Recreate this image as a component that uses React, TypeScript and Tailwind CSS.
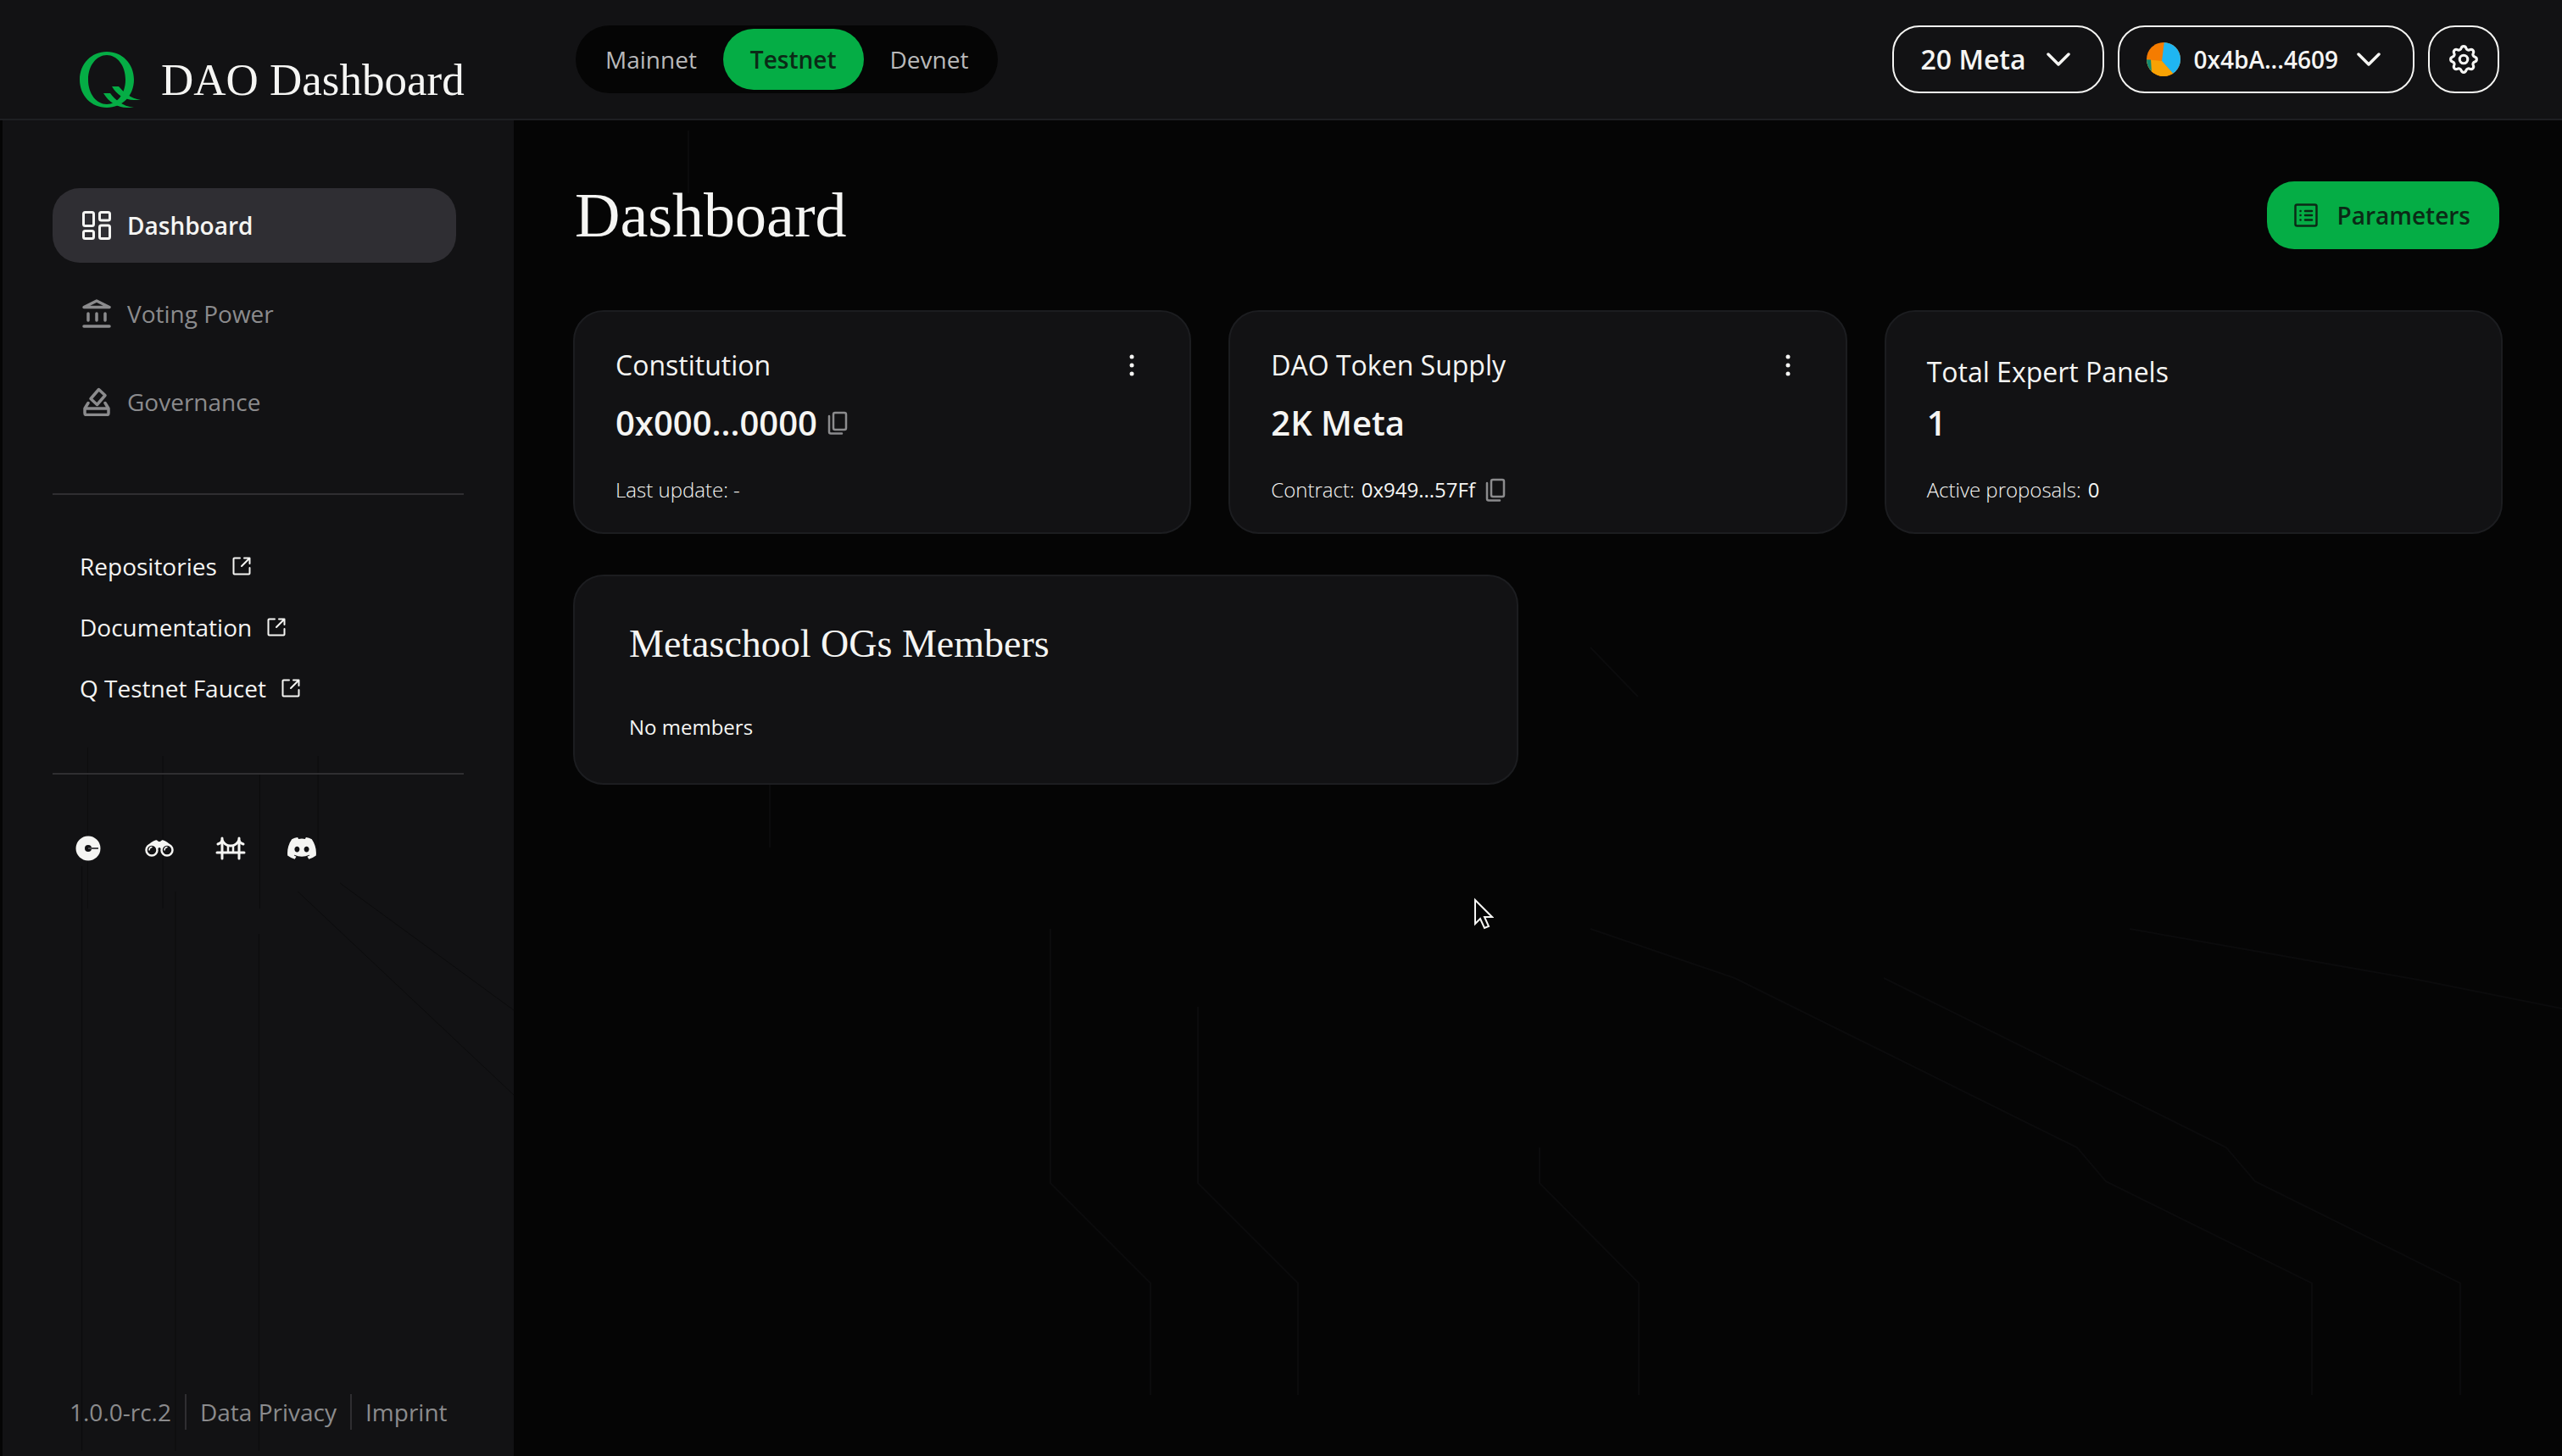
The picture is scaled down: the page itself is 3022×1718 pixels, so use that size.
import React from "react";

const sans = "font-['Open_Sans','Noto_Sans',sans-serif]";
const serif = "font-['Liberation_Serif',serif]";

function Logo() {
  return (
    <svg viewBox="0 0 72 66" className="h-[66px] w-[72px] shrink-0" fill="#05ad45" aria-hidden="true">
      <path
        fillRule="evenodd"
        d="M32 0C50 0 64 14 64 33S50 66 32 66 0 52 0 33 14 0 32 0Zm0 4C20 4 10 16 10 33s10 29 22 29 22-12 22-29S44 4 32 4Z"
      />
      <path d="M38 41h8c6 7 14 14 26 16h-8c-11 0-21-7-26-16Z" />
      <path d="M28 49h8c6 8 14 15 28 17h-8c-12 0-22-7-28-17Z" />
    </svg>
  );
}

function GridIcon() {
  return (
    <svg viewBox="0 0 34 34" className="size-[34px]" fill="none" stroke="currentColor" strokeWidth="3" aria-hidden="true">
      <rect x="1.5" y="1.5" width="12" height="16" rx="2" />
      <rect x="20.500" y="1.5" width="12" height="9.500" rx="2" />
      <rect x="1.5" y="23.500" width="12" height="9" rx="2" />
      <rect x="20.500" y="17" width="12" height="15.500" rx="2" />
    </svg>
  );
}

function BankIcon() {
  return (
    <svg viewBox="0 0 34 34" className="size-[34px]" fill="none" stroke="currentColor" strokeWidth="3.500" strokeLinecap="round" strokeLinejoin="round" aria-hidden="true">
      <path d="M2 9.500 17 2l15 7.500Z" />
      <path d="M7 17v8M17 17v8M27 17v8M2 32h30" />
    </svg>
  );
}

function VoteIcon() {
  return (
    <svg viewBox="0 0 34 34" className="size-[34px]" fill="none" stroke="currentColor" strokeWidth="3.500" strokeLinecap="round" strokeLinejoin="round" aria-hidden="true">
      <path d="M19.500 2.500 27 9.500 17.500 20.500 10 13.500Z" />
      <path d="M7 18.500 3 25v5.500a2 2 0 0 0 2 2h24a2 2 0 0 0 2-2V25l-4-6.500M3 25h28" />
    </svg>
  );
}

function ExternalIcon() {
  return (
    <svg viewBox="0 0 22 22" className="size-[22px]" fill="none" stroke="currentColor" strokeWidth="2" strokeLinecap="round" strokeLinejoin="round" aria-hidden="true">
      <path d="M9 1.500H2.500a1 1 0 0 0-1 1v17a1 1 0 0 0 1 1h17a1 1 0 0 0 1-1V13" />
      <path d="M14 1.500h6.500V8M20 2l-9 9" />
    </svg>
  );
}

function CopyIcon() {
  return (
    <svg viewBox="0 0 24 28" className="h-7 w-6" fill="none" stroke="currentColor" strokeWidth="2.500" strokeLinecap="round" strokeLinejoin="round" aria-hidden="true">
      <rect x="7" y="2" width="15" height="20" rx="2" />
      <path d="M2 6v18.500a2 2 0 0 0 2 2h13" />
    </svg>
  );
}

function DotsIcon() {
  return (
    <svg viewBox="0 0 8 26" className="h-[26px] w-2" fill="currentColor" aria-hidden="true">
      <circle cx="4" cy="3" r="2.500" />
      <circle cx="4" cy="13" r="2.500" />
      <circle cx="4" cy="23" r="2.500" />
    </svg>
  );
}

function Chevron() {
  return (
    <svg viewBox="0 0 28 16" className="h-4 w-7" fill="none" stroke="currentColor" strokeWidth="3.500" strokeLinecap="round" strokeLinejoin="round" aria-hidden="true">
      <path d="m2 2 12 12L26 2" />
    </svg>
  );
}

function Avatar() {
  return (
    <svg viewBox="0 0 40 40" className="size-10" aria-hidden="true">
      <clipPath id="avatar-clip">
        <circle cx="20" cy="20" r="20" />
      </clipPath>
      <g clipPath="url(#avatar-clip)">
        <rect width="40" height="40" fill="#f57c00" />
        <path d="M21-2 18 22 34 40h10V-2Z" fill="#1fb6f2" />
        <path d="M-2 20 18 22 34 40H-2Z" fill="#f8a204" />
        <path d="M-2 20 5 20.500 6 36H-2Z" fill="#138a72" />
      </g>
    </svg>
  );
}

function GearIcon() {
  return (
    <svg viewBox="0 0 24 24" className="size-[38px]" fill="none" stroke="currentColor" strokeWidth="2" strokeLinecap="round" strokeLinejoin="round" aria-hidden="true">
      <circle cx="12" cy="12" r="3" />
      <path d="M10.200 3.600a1.900 1.900 0 0 1 3.600 0 1.900 1.900 0 0 0 2.900 1.200 1.900 1.900 0 0 1 2.500 2.500 1.900 1.900 0 0 0 1.200 2.900 1.900 1.900 0 0 1 0 3.600 1.900 1.900 0 0 0-1.200 2.900 1.900 1.900 0 0 1-2.500 2.500 1.900 1.900 0 0 0-2.900 1.200 1.900 1.900 0 0 1-3.600 0 1.900 1.900 0 0 0-2.900-1.200 1.900 1.900 0 0 1-2.500-2.500 1.900 1.900 0 0 0-1.200-2.900 1.900 1.900 0 0 1 0-3.600 1.900 1.900 0 0 0 1.200-2.900 1.900 1.900 0 0 1 2.500-2.500 1.900 1.900 0 0 0 2.900-1.200Z" />
    </svg>
  );
}

function ListIcon() {
  return (
    <svg viewBox="0 0 28 28" className="size-7" fill="none" stroke="currentColor" strokeWidth="2.500" strokeLinecap="round" aria-hidden="true">
      <rect x="1.500" y="1.500" width="25" height="25" rx="2" />
      <path d="M7.500 9h.1M7.500 14h.1M7.500 19.500h.1M13 9h8M13 14h8M13 19.500h8" />
    </svg>
  );
}

function CoinIcon() {
  return (
    <svg viewBox="0 0 30 30" className="size-[30px]" aria-hidden="true">
      <circle cx="15" cy="15" r="14.500" fill="#f5f5f3" />
      <circle cx="15" cy="15" r="4" fill="#121214" />
      <path d="M15 15h12" stroke="#4a4a4c" strokeWidth="2" />
    </svg>
  );
}

function BinocularsIcon() {
  return (
    <svg viewBox="0 0 34 20" className="h-5 w-[34px]" fill="none" stroke="#f5f5f3" aria-hidden="true">
      <path d="M2 10C4 5 8 2 11 1c2-1 3-1 5 1h2c2-2 3-2 5-1 3 1 7 4 9 9l-9-3-3 4h-6l-3-4Z" fill="#f5f5f3" stroke="none" />
      <circle cx="8" cy="12" r="6.500" fill="#121214" strokeWidth="2.500" />
      <circle cx="26" cy="12" r="6.500" fill="#121214" strokeWidth="2.500" />
      <path d="M5 12c0-2 1-3 3-3.500M23 12c0-2 1-3 3-3.500" strokeWidth="1.500" strokeLinecap="round" />
      <circle cx="17" cy="10.500" r="1.500" fill="#121214" stroke="none" />
    </svg>
  );
}

function BridgeIcon() {
  return (
    <svg viewBox="0 0 36 28" className="h-7 w-9" fill="none" stroke="#f5f5f3" strokeWidth="3" strokeLinecap="round" aria-hidden="true">
      <path d="M8 2v24M28 2v24M2 19h32" />
      <path d="M3 9c3-1 5-3 5-5 2 5 5 7 10 7s8-2 10-7c0 2 2 4 5 5" />
      <path d="M15 11v7M21 11v7" strokeWidth="2.500" />
    </svg>
  );
}

function DiscordIcon() {
  return (
    <svg viewBox="0 0 34 26" className="h-[26px] w-[34px]" fill="#f5f5f3" aria-hidden="true">
      <path
        fillRule="evenodd"
        d="M28.800 2.200A28 28 0 0 0 21.900 0l-1 1.900a26 26 0 0 0-7.800 0L12.100 0a28 28 0 0 0-6.900 2.200C.8 8.700-.4 15.100.2 21.400a28 28 0 0 0 8.500 4.300l1.800-3a18 18 0 0 1-2.800-1.400l.7-.5c5.400 2.500 11.800 2.500 17.200 0l.7.5c-.9.500-1.800 1-2.800 1.400l1.800 3a28 28 0 0 0 8.500-4.300c.7-7.300-1.200-13.600-5-19.200ZM11.400 17.500c-1.700 0-3-1.500-3-3.400s1.300-3.400 3-3.400 3 1.500 3 3.400-1.300 3.400-3 3.400Zm11.200 0c-1.700 0-3-1.500-3-3.400s1.300-3.400 3-3.400 3 1.500 3 3.400-1.300 3.400-3 3.400Z"
      />
    </svg>
  );
}

function CircuitLines() {
  return (
    <svg viewBox="0 0 3022 1718" className="pointer-events-none absolute inset-0 size-full" fill="none" strokeWidth="2" aria-hidden="true">
      <g stroke="#0b0b0c">
        <path d="M1239 1096v300l118 118v132M1413 1188v208l118 118v132M1816 1354v42l117 118v132" />
        <path d="M1876 1096l170 58 404 200 34 40 243 120v132M2222 1154l404 200 34 40 242 120v132M2512 1096l340 60 170 34" />
        <path d="M1876 764l56 58M812 154v74M908 926v74" />
      </g>
    </svg>
  );
}

function SidebarLines() {
  return (
    <svg viewBox="0 0 606 1576" preserveAspectRatio="none" className="pointer-events-none absolute inset-0 size-full" fill="none" stroke="#0c0c0d" strokeWidth="1" aria-hidden="true">
      <path d="M94 880v690M205 910v660M304 960v610M374 750v110M101 740v190M190 750v180M305 770v160M350 910l256 240M400 900l206 150" />
    </svg>
  );
}

function Cursor() {
  return (
    <svg viewBox="0 0 24 38" className="absolute left-[1738px] top-[1059px] h-[38px] w-6" fill="#050505" stroke="#f5f5f3" strokeWidth="2" aria-hidden="true">
      <path d="M2 3v28l6-6 5 11 5-2-5-11h9Z" />
    </svg>
  );
}

const navItems = [
  { label: "Dashboard", icon: <GridIcon />, active: true },
  { label: "Voting Power", icon: <BankIcon />, active: false },
  { label: "Governance", icon: <VoteIcon />, active: false },
];

const externalLinks = ["Repositories", "Documentation", "Q Testnet Faucet"];

const socials = [
  { label: "Token", icon: <CoinIcon /> },
  { label: "Explorer", icon: <BinocularsIcon /> },
  { label: "Bridge", icon: <BridgeIcon /> },
  { label: "Discord", icon: <DiscordIcon /> },
];

const networks = ["Mainnet", "Testnet", "Devnet"];

function Sidebar() {
  return (
    <aside className="relative flex w-[606px] shrink-0 flex-col border-l-[3px] border-[#050505] bg-[#121214]">
      <SidebarLines />
      <div className="relative flex grow flex-col pl-[59px] pr-[59px] pt-20">
        <nav className="flex flex-col gap-4 pr-[9px]" aria-label="Main">
          {navItems.map((item) => (
            <a
              key={item.label}
              href="#"
              className={
                item.active
                  ? "flex h-[88px] items-center gap-[19px] rounded-[32px] bg-[#2f2e33] pl-[35px] text-[28px] font-semibold text-[#f5f5f3]"
                  : "flex h-[88px] items-center gap-[19px] rounded-[32px] pl-[35px] text-[28px] text-[#8b8b8d]"
              }
            >
              {item.icon}
              {item.label}
            </a>
          ))}
        </nav>
        <ul className="mt-16 flex flex-col gap-8 border-y-2 border-[#2f2e31] px-8 pb-20 pt-16">
          {externalLinks.map((label) => (
            <li key={label}>
              <a href="#" className="flex h-10 items-center gap-[18px] text-[28px] text-[#f5f5f3]">
                {label}
                <ExternalIcon />
              </a>
            </li>
          ))}
        </ul>
        <ul className="mt-[65px] flex pl-0">
          {socials.map((item) => (
            <li key={item.label}>
              <a href="#" aria-label={item.label} className="flex h-11 w-[84px] items-center justify-center">
                {item.icon}
              </a>
            </li>
          ))}
        </ul>
        <footer className="mb-8 mt-auto flex h-10 items-center pl-5 text-[28px] text-[#8b8b8d]">
          <span className="pr-4">1.0.0-rc.2</span>
          <a href="#" className="border-l-2 border-[#2f2e31] px-4">
            Data Privacy
          </a>
          <a href="#" className="border-l-2 border-[#2f2e31] pl-4">
            Imprint
          </a>
        </footer>
      </div>
    </aside>
  );
}

function Header() {
  const outline = "flex h-20 items-center rounded-[32px] border-2 border-[#f5f5f3] font-semibold text-[#f5f5f3]";
  return (
    <header className="relative flex h-[142px] items-center border-b-2 border-[#1e1f22] bg-[#121214] pr-[74px]">
      <a href="#" className="flex w-[606px] shrink-0 items-center gap-6 pl-[94px] pt-[48px]">
        <Logo />
        <span className={`${serif} whitespace-nowrap text-[53px] leading-none text-[#f5f5f3]`}>DAO Dashboard</span>
      </a>
      <div className="ml-[73px] flex h-20 items-center rounded-full bg-[#050505] p-1">
        {networks.map((name) => (
          <button
            key={name}
            type="button"
            className={
              name === "Testnet"
                ? "h-[72px] rounded-full bg-[#05ad45] px-8 text-[28px] font-semibold text-[#0b2a16]"
                : "h-[72px] rounded-full px-[31px] text-[28px] text-[#b9b9ba]"
            }
          >
            {name}
          </button>
        ))}
      </div>
      <div className="ml-auto flex gap-4">
        <button type="button" className={`${outline} gap-6 pl-8 pr-[38px] text-[32px]`}>
          20 Meta
          <Chevron />
        </button>
        <button type="button" className={`${outline} gap-4 pl-8 pr-[38px] text-[28px]`}>
          <Avatar />
          0x4bA...4609
          <span className="pl-[6px]">
            <Chevron />
          </span>
        </button>
        <button type="button" aria-label="Settings" className={`${outline} w-[84px] justify-center`}>
          <GearIcon />
        </button>
      </div>
    </header>
  );
}

type StatCardProps = {
  title: string;
  value: string;
  footer: React.ReactNode;
  copyValue?: boolean;
  menu?: boolean;
};

function StatCard({ title, value, footer, copyValue, menu }: StatCardProps) {
  return (
    <section className="flex h-[264px] min-w-0 grow basis-0 flex-col rounded-[36px] border-2 border-[#1c1d20] bg-[#121214] px-12 pb-8 pt-[39px] text-[#f5f5f3]">
      <div className={menu ? "flex h-12 items-center justify-between" : "flex h-16 items-center"}>
        <h2 className="text-[32px] leading-[48px]">{title}</h2>
        {menu && (
          <button type="button" aria-label={`${title} menu`} className="px-4">
            <DotsIcon />
          </button>
        )}
      </div>
      <p className={menu ? "mt-4 flex h-14 items-center gap-3 text-[40px] font-semibold" : "flex h-14 items-center text-[40px] font-semibold"}>
        {value}
        {copyValue && (
          <button type="button" aria-label="Copy address" className="text-[#8b8b8d]">
            <CopyIcon />
          </button>
        )}
      </p>
      <p className="mt-auto flex h-9 items-center text-[24px] font-light">{footer}</p>
    </section>
  );
}

export default function App() {
  return (
    <div className={`${sans} relative flex min-h-screen flex-col overflow-hidden bg-[#050505]`}>
      <CircuitLines />
      <Header />
      <div className="flex grow">
        <Sidebar />
        <main className="relative min-w-0 grow pb-16 pl-[70px] pr-[70px] pt-[72px]">
          <div className="flex h-20 items-center justify-between pl-[2px] pr-1">
            <h1 className={`${serif} text-[74px] leading-none text-[#f5f5f3]`}>Dashboard</h1>
            <button
              type="button"
              className="flex h-20 items-center gap-[22px] rounded-[32px] bg-[#05ad45] pl-8 pr-[34px] text-[28px] font-semibold text-[#0b2a16]"
            >
              <ListIcon />
              Parameters
            </button>
          </div>
          <div className="mt-[72px] flex gap-[44px]">
            <StatCard title="Constitution" value="0x000...0000" copyValue menu footer="Last update: -" />
            <StatCard
              title="DAO Token Supply"
              value="2K Meta"
              menu
              footer={
                <>
                  <span>Contract:</span>
                  <span className="ml-2 font-normal">0x949...57Ff</span>
                  <button type="button" aria-label="Copy contract" className="ml-3 text-[#8b8b8d]">
                    <CopyIcon />
                  </button>
                </>
              }
            />
            <StatCard
              title="Total Expert Panels"
              value="1"
              footer={
                <>
                  <span>Active proposals:</span>
                  <span className="ml-2 font-normal">0</span>
                </>
              }
            />
          </div>
          <section className="mt-12 w-[49%] rounded-[36px] border-2 border-[#1c1d20] bg-[#121214] px-16 pb-12 pt-[52px] text-[#f5f5f3]">
            <h2 className={`${serif} text-[46px] leading-[56px]`}>Metaschool OGs Members</h2>
            <p className="mt-[52px] text-[24px] leading-[36px]">No members</p>
          </section>
        </main>
      </div>
      <Cursor />
    </div>
  );
}
